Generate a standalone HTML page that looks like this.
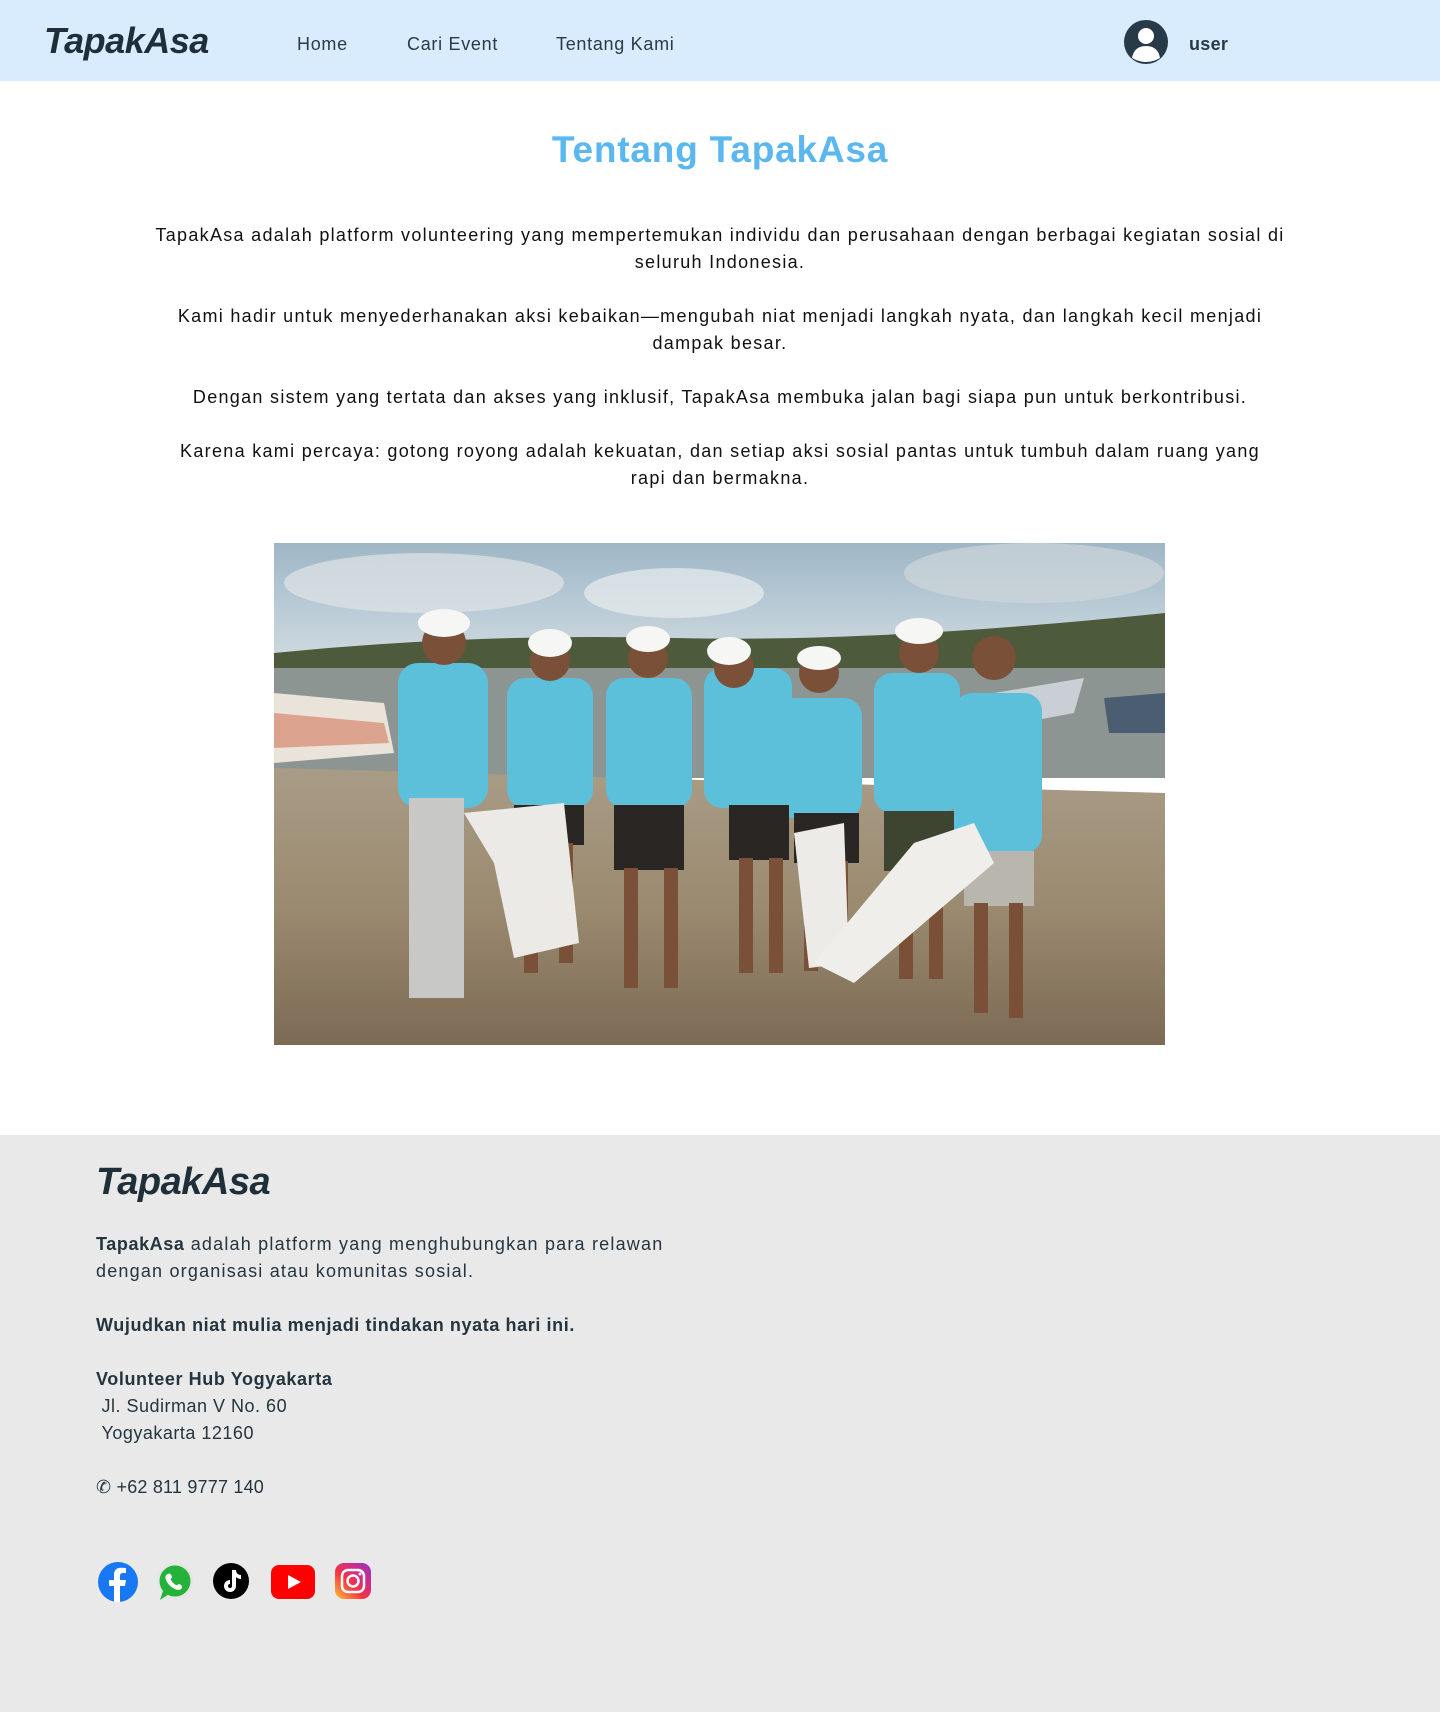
<!DOCTYPE html>
<html><head><meta charset="utf-8">
<style>
*{margin:0;padding:0;box-sizing:border-box}
body{width:1440px;height:1712px;background:#fff;font-family:"Liberation Sans",sans-serif;color:#111;position:relative;overflow:hidden}
.hdr{position:absolute;left:0;top:0;width:1440px;height:81px;background:#d8ecfd}
.logo{position:absolute;font-style:italic;font-weight:bold;color:#1f2f3a;letter-spacing:-0.5px}
.nav{position:absolute;top:34px;font-size:18px;color:#2b3a44;letter-spacing:0.7px}
.av{position:absolute;left:1124px;top:20px;width:44px;height:44px;border-radius:50%;background:#263a47;overflow:hidden}
h1{position:absolute;top:129px;left:0;width:1440px;text-align:center;font-size:37px;color:#5ab7ef;font-weight:bold;letter-spacing:0.8px}
.about{position:absolute;left:0;top:222px;width:1440px;text-align:center;font-size:18px;line-height:27px;color:#111;letter-spacing:1.3px;white-space:nowrap}
.about p{margin-bottom:27px}
.photo{position:absolute;left:274px;top:543px;width:891px;height:502px}
.ftr{position:absolute;left:0;top:1135px;width:1440px;height:577px;background:#e9e9e9;color:#253540}
.ft{position:absolute;left:96px;font-size:18px;line-height:27px;letter-spacing:1.2px;color:#253540;white-space:nowrap}
.ic{position:absolute;top:1561px}
</style></head><body>
<div class="hdr">
  <div class="logo" style="left:44px;top:20px;font-size:36px">TapakAsa</div>
  <div class="nav" style="left:297px">Home</div>
  <div class="nav" style="left:407px">Cari Event</div>
  <div class="nav" style="left:556px">Tentang Kami</div>
  <div class="av"><svg width="44" height="44" viewBox="0 0 44 44"><circle cx="22" cy="16" r="8" fill="#fff"/><path d="M8 38 Q10 26 22 26 Q34 26 36 38 Q22 46 8 38Z" fill="#fff"/></svg></div>
  <div class="nav" style="left:1189px;font-weight:bold;color:#263a47;letter-spacing:0.3px">user</div>
</div>
<h1>Tentang TapakAsa</h1>
<div class="about">
<p>TapakAsa adalah platform volunteering yang mempertemukan individu dan perusahaan dengan berbagai kegiatan sosial di<br>seluruh Indonesia.</p>
<p>Kami hadir untuk menyederhanakan aksi kebaikan—mengubah niat menjadi langkah nyata, dan langkah kecil menjadi<br>dampak besar.</p>
<p>Dengan sistem yang tertata dan akses yang inklusif, TapakAsa membuka jalan bagi siapa pun untuk berkontribusi.</p>
<p>Karena kami percaya: gotong royong adalah kekuatan, dan setiap aksi sosial pantas untuk tumbuh dalam ruang yang<br>rapi dan bermakna.</p>
</div>
<svg class="photo" viewBox="0 0 891 502">
<defs>
<linearGradient id="sky" x1="0" y1="0" x2="0" y2="1"><stop offset="0" stop-color="#9fb6c6"/><stop offset="0.5" stop-color="#b9cbd6"/><stop offset="1" stop-color="#d5dde0"/></linearGradient>
<linearGradient id="sand" x1="0" y1="0" x2="0" y2="1"><stop offset="0" stop-color="#a99c86"/><stop offset="0.5" stop-color="#9a8a70"/><stop offset="1" stop-color="#7d6b55"/></linearGradient>
</defs>
<rect width="891" height="130" fill="url(#sky)"/>
<ellipse cx="150" cy="40" rx="140" ry="30" fill="#dfe4e6" opacity=".7"/>
<ellipse cx="400" cy="50" rx="90" ry="25" fill="#e8eced" opacity=".7"/>
<ellipse cx="760" cy="30" rx="130" ry="30" fill="#cfd6da" opacity=".7"/>
<path d="M0 110 Q200 90 400 95 T891 70 L891 130 L0 130Z" fill="#4e5a3c"/>
<rect y="125" width="891" height="110" fill="#8d9592"/>
<path d="M0 225 L891 250 L891 502 L0 502Z" fill="url(#sand)"/>
<path d="M0 150 L110 160 L120 210 L0 220Z" fill="#e9e3da"/>
<path d="M0 170 L110 180 L115 200 L0 205Z" fill="#d2785a" opacity=".6"/>
<path d="M720 150 L810 135 L800 170 L720 185Z" fill="#c9cfd4"/>
<path d="M830 155 L891 150 L891 190 L835 190Z" fill="#4b5d70"/>
<g fill="#5cc0db">
<rect x="124" y="120" width="90" height="145" rx="20"/>
<rect x="233" y="135" width="86" height="130" rx="18"/>
<rect x="332" y="135" width="86" height="130" rx="18"/>
<rect x="430" y="125" width="88" height="140" rx="18"/>
<rect x="500" y="155" width="88" height="120" rx="18"/>
<rect x="600" y="130" width="86" height="140" rx="18"/>
<rect x="680" y="150" width="88" height="160" rx="18"/>
</g>
<g fill="#2a2624">
<rect x="240" y="262" width="70" height="40"/>
<rect x="340" y="262" width="70" height="65"/>
<rect x="455" y="262" width="60" height="55"/>
<rect x="520" y="270" width="65" height="50"/>
<rect x="610" y="268" width="70" height="60" fill="#3d4530"/>
<rect x="690" y="308" width="70" height="55" fill="#b9b6ad"/>
</g>
<g fill="#7a5038">
<rect x="250" y="300" width="14" height="130"/><rect x="285" y="300" width="14" height="120"/>
<rect x="350" y="325" width="14" height="120"/><rect x="390" y="325" width="14" height="120"/>
<rect x="465" y="315" width="14" height="115"/><rect x="495" y="315" width="14" height="115"/>
<rect x="530" y="318" width="14" height="110"/><rect x="560" y="318" width="14" height="110"/>
<rect x="625" y="326" width="14" height="110"/><rect x="655" y="326" width="14" height="110"/>
<rect x="700" y="360" width="14" height="110"/><rect x="735" y="360" width="14" height="115"/>
<circle cx="170" cy="100" r="22"/><circle cx="276" cy="118" r="20"/><circle cx="374" cy="115" r="20"/>
<circle cx="460" cy="125" r="20"/><circle cx="545" cy="130" r="20"/><circle cx="645" cy="110" r="20"/><circle cx="720" cy="115" r="22"/>
</g>
<rect x="135" y="255" width="55" height="200" fill="#c8c8c6"/>
<g fill="#f6f6f4">
<ellipse cx="170" cy="80" rx="26" ry="14"/><ellipse cx="276" cy="100" rx="22" ry="14"/><ellipse cx="374" cy="96" rx="22" ry="13"/>
<ellipse cx="455" cy="108" rx="22" ry="14"/><ellipse cx="545" cy="115" rx="22" ry="12"/><ellipse cx="645" cy="88" rx="24" ry="13"/>
<path d="M190 270 L290 260 L305 400 L240 415 L220 320Z" fill="#eceae6"/>
<path d="M520 290 L570 280 L575 420 L535 425Z" fill="#ecebe7"/>
<path d="M640 300 L700 280 L720 320 L580 440 L540 420Z" fill="#efeeeb"/>
</g>
</svg>
<div class="ftr"></div>
<div class="logo" style="left:96px;top:1161px;font-size:38px;color:#1f2f3a">TapakAsa</div>
<div class="ft" style="top:1231px"><b style="letter-spacing:0.6px">TapakAsa</b> adalah platform yang menghubungkan para relawan<br>dengan organisasi atau komunitas sosial.</div>
<div class="ft" style="top:1312px;font-weight:bold;letter-spacing:0.6px">Wujudkan niat mulia menjadi tindakan nyata hari ini.</div>
<div class="ft" style="top:1366px;letter-spacing:0.5px"><b style="letter-spacing:0.6px">Volunteer Hub Yogyakarta</b><br>&nbsp;Jl. Sudirman V No. 60<br>&nbsp;Yogyakarta 12160</div>
<div class="ft" style="top:1474px;letter-spacing:0.2px">&#9990; +62 811 9777 140</div>
<svg class="ic" style="left:97px" width="42" height="42" viewBox="0 0 42 42"><circle cx="21" cy="21" r="20" fill="#1877f2"/><path d="M23 41 V25 h5 l1-6 h-6 v-4 c0-2 1-3 3-3 h3 v-5 c-1 0-3-.3-5-.3 -5 0-7 3-7 7 v5.3 h-5 v6 h5 v16Z" fill="#fff"/></svg>
<svg class="ic" style="left:155px" width="40" height="42" viewBox="0 0 40 42"><circle cx="20" cy="20" r="17" fill="#25b23b" stroke="#e6e6e6" stroke-width="3"/><path d="M5 39 L8 30 L14 33Z" fill="#25b23b"/><path d="M13 13 c2-2 4 2 4 3 s-2 2-1 3 c1 2 3 4 5 5 1 1 2-1 3-1 s4 2 3 4 c-2 3-6 2-9 0 -3-2-6-5-7-8 -1-3-1-5 2-6Z" fill="#fff"/></svg>
<svg class="ic" style="left:212px" width="38" height="40" viewBox="0 0 38 40"><circle cx="19" cy="20" r="18" fill="#000"/><path d="M20 9 h4 c0 3 2 5 5 5 v4 c-2 0-4-1-5-2 v9 a6 6 0 1 1-6-6 v4 a2 2 0 1 0 2 2Z" fill="#fff"/></svg>
<svg class="ic" style="left:271px;top:1565px" width="44" height="34" viewBox="0 0 44 34"><rect width="44" height="34" rx="8" fill="#f00"/><path d="M17 10 L30 17 L17 24Z" fill="#fff"/></svg>
<svg class="ic" style="left:335px;top:1563px" width="36" height="36" viewBox="0 0 36 36"><defs><linearGradient id="ig" x1="0" y1="1" x2="1" y2="0"><stop offset="0" stop-color="#fdc43b"/><stop offset=".4" stop-color="#f4353f"/><stop offset=".7" stop-color="#d12b8d"/><stop offset="1" stop-color="#8a3ab9"/></linearGradient></defs><rect width="36" height="36" rx="9" fill="url(#ig)"/><rect x="7" y="7" width="22" height="22" rx="6" fill="none" stroke="#fff" stroke-width="2.5"/><circle cx="18" cy="18" r="5.5" fill="none" stroke="#fff" stroke-width="2.5"/><circle cx="25" cy="11" r="1.5" fill="#fff"/></svg>
</body></html>
